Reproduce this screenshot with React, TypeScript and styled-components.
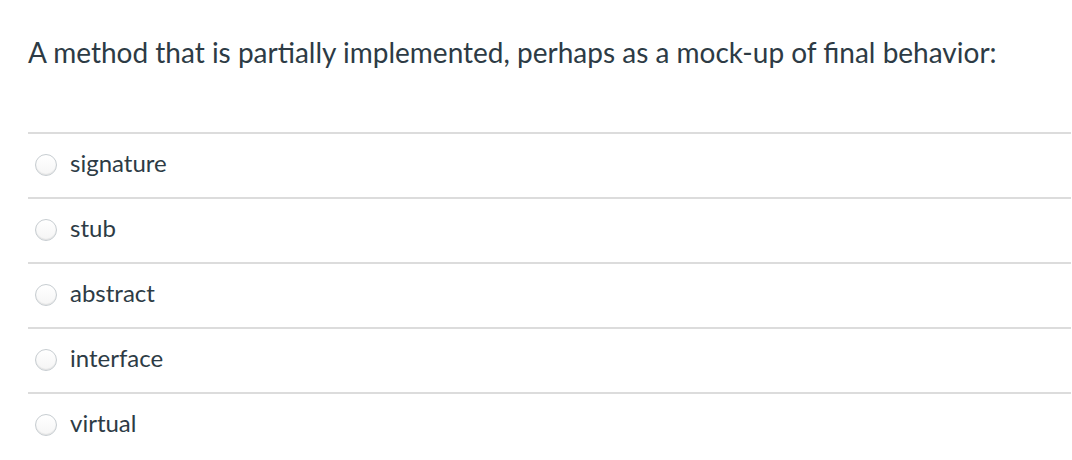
import styled, { createGlobalStyle } from "styled-components";

const GlobalStyle = createGlobalStyle`
  body {
    margin: 0;
    background: #fff;
    font-family: Lato, "Liberation Sans", sans-serif;
    color: #2d3b45;
  }
`;

const Container = styled.div`
  padding: 31px 1px 0 28px;
`;

const Question = styled.p`
  margin: 0;
  font-size: 28px;
  line-height: 42px;
  height: 101px;
`;

const Answers = styled.ul`
  list-style: none;
  margin: 0;
  padding: 0;
`;

const Answer = styled.li`
  border-top: 2px solid #dcdcdc;
  height: 63px;
  display: flex;
  align-items: center;
  padding-left: 7px;
`;

const Radio = styled.span`
  width: 22px;
  height: 22px;
  border-radius: 50%;
  border: 1px solid #c7cdd1;
  box-sizing: border-box;
  background: linear-gradient(#fff, #f5f5f5);
  box-shadow: inset 0 -1px 1px rgba(0, 0, 0, 0.08);
  margin-right: 13px;
  margin-top: -2px;
  flex-shrink: 0;
`;

const Label = styled.span`
  font-size: 24px;
  line-height: 28px;
  margin-top: -6px;
`;

const options = ["signature", "stub", "abstract", "interface", "virtual"];

function App() {
  return (
    <Container>
      <GlobalStyle />
      <Question>
        A method that is partially implemented, perhaps as a mock-up of final behavior:
      </Question>
      <Answers>
        {options.map((o) => (
          <Answer key={o}>
            <Radio />
            <Label>{o}</Label>
          </Answer>
        ))}
      </Answers>
    </Container>
  );
}

export default App;
